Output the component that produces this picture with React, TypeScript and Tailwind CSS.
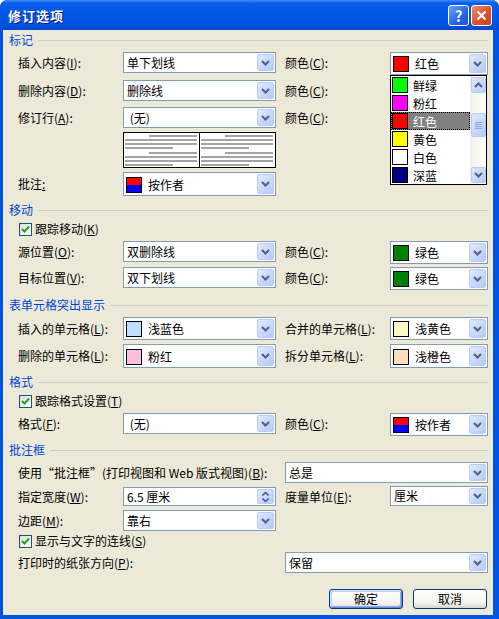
import React, { ReactNode } from 'react';

// XP style chevron used in combo and scroll buttons
function Chevron({ up = false }: { up?: boolean }) {
  return (
    <svg width="9" height="6" viewBox="0 0 9 6">
      <path
        d={up ? 'M1 5 L4.5 1.5 L8 5' : 'M1 1 L4.5 4.5 L8 1'}
        fill="none"
        stroke="#4D6185"
        strokeWidth="2"
      />
    </svg>
  );
}

function DropBtn() {
  return (
    <div className="my-[1px] mr-[1px] w-[17px] shrink-0 rounded-[2px] border border-[#BACCF5] bg-[linear-gradient(135deg,#E0E9FE,#B6CAF8)] flex items-center justify-center">
      <Chevron />
    </div>
  );
}

function SpinBtn() {
  return (
    <div className="my-[1px] mr-[1px] w-[17px] shrink-0 rounded-[2px] border border-[#BACCF5] bg-[linear-gradient(135deg,#E0E9FE,#B6CAF8)] flex flex-col items-center justify-center gap-[2px]">
      <svg width="7" height="4" viewBox="0 0 7 4">
        <path d="M0.5 3.5 L3.5 0.5 L6.5 3.5" fill="none" stroke="#4D6185" strokeWidth="1.6" />
      </svg>
      <svg width="7" height="4" viewBox="0 0 7 4">
        <path d="M0.5 0.5 L3.5 3.5 L6.5 0.5" fill="none" stroke="#4D6185" strokeWidth="1.6" />
      </svg>
    </div>
  );
}

interface ComboProps {
  className?: string;
  children: ReactNode;
  spin?: boolean;
  swatch?: boolean;
}

function Combo({ className = '', children, spin = false, swatch = false }: ComboProps) {
  return (
    <div className={`flex bg-white border border-[#7F9DB9] shrink-0 ${className}`}>
      <div
        className={`flex-1 flex items-center whitespace-nowrap overflow-hidden ${
          swatch ? 'pl-[2px] gap-[6px] pt-[1px]' : 'pl-[3px]'
        }`}
      >
        {children}
      </div>
      {spin ? <SpinBtn /> : <DropBtn />}
    </div>
  );
}

function Swatch({ color }: { color: string }) {
  return <span className={`w-[16px] h-[16px] border border-black shrink-0 ${color}`} />;
}

function AuthorSwatch() {
  return (
    <span className="w-[16px] h-[16px] border border-black shrink-0 flex flex-col">
      <span className="flex-1 bg-[#FF0000]" />
      <span className="flex-1 bg-[#0000FF]" />
    </span>
  );
}

function Label({ children, className = 'w-[105px]' }: { children: ReactNode; className?: string }) {
  return <div className={`h-[21px] flex items-center shrink-0 ${className}`}>{children}</div>;
}

function Section({ title, className = '' }: { title: string; className?: string }) {
  return (
    <div className={`flex items-center h-[14px] ${className}`}>
      <span className="text-[#0046D5]">{title}</span>
      <div className="flex-1 ml-[5px] h-px bg-[#D0CEBF]" />
    </div>
  );
}

function CheckBox({ children, className = '' }: { children: ReactNode; className?: string }) {
  return (
    <div className={`flex items-center ml-[10px] h-[14px] ${className}`}>
      <span className="w-[13px] h-[13px] border border-[#1C5180] bg-[linear-gradient(135deg,#DCDCD7,#FFFFFF)] flex items-center justify-center shrink-0">
        <svg width="9" height="9" viewBox="0 0 9 9">
          <path d="M1 4 L3.5 6.5 L8 1.5" fill="none" stroke="#21A121" strokeWidth="2" />
        </svg>
      </span>
      <span className="ml-[3px]">{children}</span>
    </div>
  );
}

function Preview() {
  const lines = [
    { y: 4, x1: 26, x2: 74 },
    { y: 8, x1: 2, x2: 74 },
    { y: 12, x1: 2, x2: 74 },
    { y: 16, x1: 2, x2: 50 },
    { y: 21, x1: 26, x2: 74 },
    { y: 25, x1: 2, x2: 74 },
    { y: 29, x1: 2, x2: 74 },
    { y: 33, x1: 2, x2: 50 },
  ];
  return (
    <svg width="75" height="34" viewBox="1 1 75 34" className="block">
      {lines.map((l, i) => (
        <line key={i} x1={l.x1} x2={l.x2} y1={l.y} y2={l.y} stroke="#A4A4A4" strokeWidth="2" />
      ))}
    </svg>
  );
}

const listItems = [
  { name: '鲜绿', color: 'bg-[#00FF00]' },
  { name: '粉红', color: 'bg-[#FF00FF]' },
  { name: '红色', color: 'bg-[#FF0000]', selected: true },
  { name: '黄色', color: 'bg-[#FFFF00]' },
  { name: '白色', color: 'bg-[#FFFFFF]' },
  { name: '深蓝', color: 'bg-[#000080]' },
];

function ColorList() {
  return (
    <div className="absolute left-0 top-[23px] w-[97px] h-[110px] border border-black bg-white flex z-10">
      <div className="flex-1 flex flex-col">
        {listItems.map((it) => (
          <div
            key={it.name}
            className={`h-[18px] flex items-center pl-[1px] gap-[5px] shrink-0 ${
              it.selected ? 'bg-[#808080] text-white outline outline-1 outline-dotted outline-black -outline-offset-1' : ''
            }`}
          >
            <Swatch color={it.color} />
            <span className="pt-[2px]">{it.name}</span>
          </div>
        ))}
      </div>
      <div className="w-[16px] bg-[linear-gradient(to_right,#F3F1EC,#FEFEFB)] flex flex-col items-center py-[1px]">
        <div className="w-[15px] h-[16px] rounded-[2px] border border-[#BACCF5] bg-[linear-gradient(135deg,#E0E9FE,#B6CAF8)] flex items-center justify-center">
          <Chevron up />
        </div>
        <div className="mt-[20px] w-[15px] h-[24px] rounded-[2px] border border-[#BACCF5] bg-[linear-gradient(135deg,#E0E9FE,#B6CAF8)] flex flex-col items-center justify-center gap-[1px]">
          <span className="w-[7px] h-px bg-[#8CA6E6]" />
          <span className="w-[7px] h-px bg-[#8CA6E6]" />
          <span className="w-[7px] h-px bg-[#8CA6E6]" />
          <span className="w-[7px] h-px bg-[#8CA6E6]" />
        </div>
        <div className="mt-auto w-[15px] h-[16px] rounded-[2px] border border-[#BACCF5] bg-[linear-gradient(135deg,#E0E9FE,#B6CAF8)] flex items-center justify-center">
          <Chevron />
        </div>
      </div>
    </div>
  );
}

export default function App() {
  return (
    <div className="w-[499px] h-[619px] bg-[#0054E3] flex flex-col rounded-t-[7px] font-['Noto_Sans_CJK_SC',sans-serif] text-[12px] leading-none text-black overflow-hidden">
      {/* title bar */}
      <div className="h-[30px] shrink-0 flex items-center pl-[8px] pr-[7px] rounded-t-[7px] bg-[linear-gradient(to_bottom,#3D8EF8_0%,#0A5DEC_10%,#0056E6_45%,#0054E2_75%,#0048D6_100%)]">
        <span className="text-white font-bold text-[13px] tracking-[1px] [text-shadow:1px_1px_0_#0A1883]">修订选项</span>
        <div className="ml-auto flex gap-[2px]">
          <div className="w-[21px] h-[21px] rounded-[3px] border border-white bg-[linear-gradient(135deg,#6CA2FB,#2563EC_60%,#1D55D9)] flex items-center justify-center text-white font-bold text-[15px]">
            ?
          </div>
          <div className="w-[21px] h-[21px] rounded-[3px] border border-white bg-[linear-gradient(135deg,#F08E6C,#E0502A_55%,#C8401C)] flex items-center justify-center">
            <svg width="11" height="11" viewBox="0 0 11 11">
              <path d="M1.5 1.5 L9.5 9.5 M9.5 1.5 L1.5 9.5" stroke="white" strokeWidth="2.2" />
            </svg>
          </div>
        </div>
      </div>

      {/* client area */}
      <div className="flex-1 ml-[3px] mr-[6px] mb-[4px] bg-[#ECE9D8] flex flex-col pl-[6px] pr-[5px]">
        <Section title="标记" className="mt-[3px]" />

        <div className="flex items-start ml-[9px] mt-[5px] h-[23px]">
          <Label>插入内容(<u>I</u>):</Label>
          <Combo className="w-[153px] h-[21px]">单下划线</Combo>
          <div className="w-[9px]" />
          <Label>颜色(<u>C</u>):</Label>
          <div className="relative">
            <Combo className="w-[98px] h-[23px]" swatch>
              <Swatch color="bg-[#FF0000]" />
              红色
            </Combo>
            <ColorList />
          </div>
        </div>

        <div className="flex items-start ml-[9px] mt-[5px] h-[21px]">
          <Label>删除内容(<u>D</u>):</Label>
          <Combo className="w-[153px] h-[21px]">删除线</Combo>
          <div className="w-[9px]" />
          <Label>颜色(<u>C</u>):</Label>
        </div>

        <div className="flex items-start ml-[9px] mt-[6px] h-[21px]">
          <Label>修订行(<u>A</u>):</Label>
          <Combo className="w-[153px] h-[21px]">&nbsp;(无)</Combo>
          <div className="w-[9px]" />
          <Label>颜色(<u>C</u>):</Label>
        </div>

        <div className="flex ml-[114px] mt-[4px] h-[36px]">
          <div className="w-[77px] h-[36px] border border-black bg-white">
            <Preview />
          </div>
          <div className="w-[76px] h-[36px] border border-black border-l-0 bg-white">
            <Preview />
          </div>
        </div>

        <div className="flex items-center ml-[9px] mt-[4px] h-[24px]">
          <Label>
            批注<u>:</u>
          </Label>
          <Combo className="w-[153px] h-[24px]" swatch>
            <AuthorSwatch />
            按作者
          </Combo>
        </div>

        <Section title="移动" className="mt-[7px]" />
        <CheckBox className="mt-[5px]">
          跟踪移动(<u>K</u>)
        </CheckBox>

        <div className="flex items-start ml-[9px] mt-[5px] h-[23px]">
          <Label>源位置(<u>O</u>):</Label>
          <Combo className="w-[153px] h-[21px]">双删除线</Combo>
          <div className="w-[9px]" />
          <Label>颜色(<u>C</u>):</Label>
          <Combo className="w-[98px] h-[23px]" swatch>
            <Swatch color="bg-[#008000]" />
            绿色
          </Combo>
        </div>

        <div className="flex items-start ml-[9px] mt-[3px] h-[23px]">
          <Label>目标位置(<u>V</u>):</Label>
          <Combo className="w-[153px] h-[21px]">双下划线</Combo>
          <div className="w-[9px]" />
          <Label>颜色(<u>C</u>):</Label>
          <Combo className="w-[98px] h-[23px]" swatch>
            <Swatch color="bg-[#008000]" />
            绿色
          </Combo>
        </div>

        <Section title="表单元格突出显示" className="mt-[8px]" />

        <div className="flex items-center ml-[9px] mt-[5px] h-[23px]">
          <Label>插入的单元格(<u>L</u>):</Label>
          <Combo className="w-[153px] h-[23px]" swatch>
            <Swatch color="bg-[#C0DFFF]" />
            浅蓝色
          </Combo>
          <div className="w-[9px]" />
          <Label>合并的单元格(<u>L</u>):</Label>
          <Combo className="w-[98px] h-[23px]" swatch>
            <Swatch color="bg-[#FAF8CA]" />
            浅黄色
          </Combo>
        </div>

        <div className="flex items-center ml-[9px] mt-[4px] h-[24px]">
          <Label>删除的单元格(<u>L</u>):</Label>
          <Combo className="w-[153px] h-[24px]" swatch>
            <Swatch color="bg-[#FFC0DE]" />
            粉红
          </Combo>
          <div className="w-[9px]" />
          <Label>拆分单元格(<u>L</u>):</Label>
          <Combo className="w-[98px] h-[24px]" swatch>
            <Swatch color="bg-[#FFDDBB]" />
            浅橙色
          </Combo>
        </div>

        <Section title="格式" className="mt-[7px]" />
        <CheckBox className="mt-[5px]">
          跟踪格式设置(<u>T</u>)
        </CheckBox>

        <div className="flex items-start ml-[9px] mt-[5px] h-[23px]">
          <Label>格式(<u>F</u>):</Label>
          <Combo className="w-[153px] h-[21px]">&nbsp;(无)</Combo>
          <div className="w-[9px]" />
          <Label>颜色(<u>C</u>):</Label>
          <Combo className="w-[98px] h-[23px]" swatch>
            <AuthorSwatch />
            按作者
          </Combo>
        </div>

        <Section title="批注框" className="mt-[7px]" />

        <div className="flex items-start ml-[9px] mt-[5px] h-[21px]">
          <Label className="w-[267px]">
            使用“批注框”(打印视图和 Web 版式视图)(<u>B</u>):
          </Label>
          <Combo className="w-[203px] h-[21px]">总是</Combo>
        </div>

        <div className="flex items-start ml-[9px] mt-[3px] h-[20px]">
          <Label className="w-[105px] h-[20px]">指定宽度(<u>W</u>):</Label>
          <Combo className="w-[153px] h-[19px] mt-[1px]" spin>
            6.5 厘米
          </Combo>
          <div className="w-[9px]" />
          <Label className="w-[105px] h-[20px]">度量单位(<u>E</u>):</Label>
          <Combo className="w-[98px] h-[20px]">厘米</Combo>
        </div>

        <div className="flex items-start ml-[9px] mt-[4px] h-[21px]">
          <Label>边距(<u>M</u>):</Label>
          <Combo className="w-[153px] h-[21px]">靠右</Combo>
        </div>

        <CheckBox className="mt-[3px]">
          显示与文字的连线(<u>S</u>)
        </CheckBox>

        <div className="flex items-start ml-[9px] mt-[4px] h-[21px]">
          <Label className="w-[267px]">打印时的纸张方向(<u>P</u>):</Label>
          <Combo className="w-[203px] h-[21px]">保留</Combo>
        </div>

        <div className="flex justify-end gap-[10px] mt-[16px] mr-[1px]">
          <button className="w-[74px] h-[20px] rounded-[3px] border border-[#003C74] bg-[linear-gradient(to_bottom,#FFFFFF,#F3F2EE_75%,#D8D3C8)] shadow-[inset_1px_1px_0_#CEE7FF,inset_-1px_-1px_0_#6982EE,inset_2px_2px_0_#BCD4F6,inset_-2px_-2px_0_#89ADE4] text-[12px] leading-none">
            确定
          </button>
          <button className="w-[74px] h-[20px] rounded-[3px] border border-[#003C74] bg-[linear-gradient(to_bottom,#FFFFFF,#F3F2EE_75%,#D8D3C8)] text-[12px] leading-none">
            取消
          </button>
        </div>
      </div>
    </div>
  );
}
